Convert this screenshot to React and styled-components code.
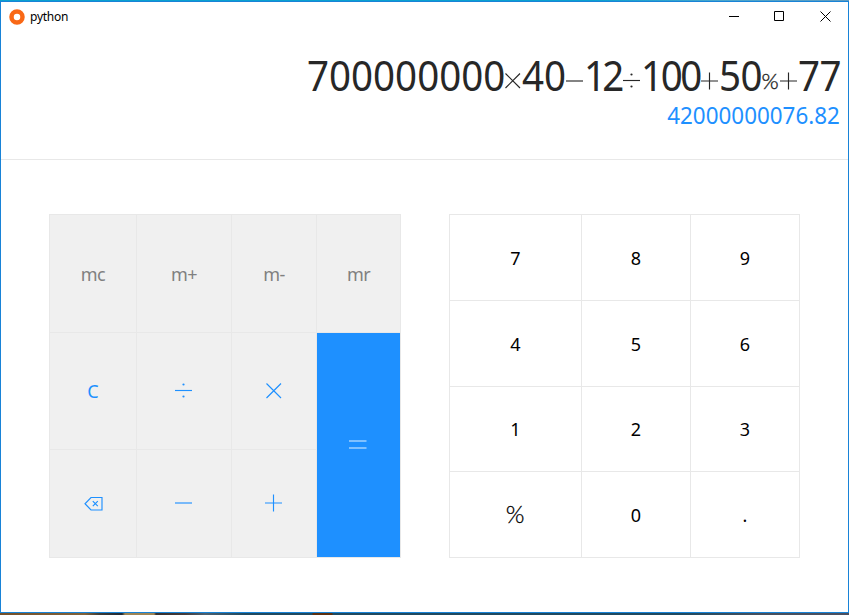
import React from "react";
import styled, { createGlobalStyle, css } from "styled-components";

const BLUE = "#1e90ff";
const LINE = "#e8e8e8";

const GlobalStyle = createGlobalStyle`
  * { box-sizing: border-box; }
  body { margin: 0; overflow: hidden; background: #1f4a60; font-family: "Noto Sans", "Open Sans", sans-serif; }
`;

const Desktop = styled.div`
  height: 615px;
  padding: 1px 0 2px;
  background:
    linear-gradient(90deg, #0ba0d0 0 70%, #4aa6cc 85%, #5f9cc0) top / 100% 1px no-repeat,
    linear-gradient(90deg, #74502a 0, #80623a 85px, #3a3b38 100px, #202a35 122px, #9c8455 125px 154px, #352f2e 156px, #443c3c 185px, #4b6070 205px, #1f4a60 245px 312px, #5c3010 313px 332px, #1f4a60 333px 680px, #46505e 760px, #4c5060) bottom / 100% 2px no-repeat;
`;

const Window = styled.main`
  display: flex;
  flex-direction: column;
  height: 612px;
  background: #fff;
  border: 1px solid #1883d7;
`;

const TitleBar = styled.header`
  display: flex;
  align-items: center;
  height: 29px;
  padding-left: 8px;
`;

const Title = styled.span`
  flex: 1;
  margin-left: 5px;
  padding-top: 1px;
  font-size: 12px;
  letter-spacing: -0.25px;
  line-height: 16px;
  color: #000;
`;

const Caption = styled.div`
  display: flex;
  width: 46px;
  height: 29px;
  align-items: center;
  justify-content: center;
  padding-bottom: 1px;
`;

const Display = styled.section`
  display: flex;
  flex-direction: column;
  align-items: flex-end;
  height: 129px;
  padding: 17px 8px 0 0;
  border-bottom: 1px solid ${LINE};
`;

const Expression = styled.div`
  display: flex;
  align-items: center;
  height: 54px;
  color: #272727;
`;

const Operand = styled.span`
  width: ${(p) => p.$width}px;
  font-size: 42px;
  line-height: 54px;
  letter-spacing: ${(p) => p.$spacing ?? 0}px;
  white-space: nowrap;
  transform: scaleX(0.917);
  transform-origin: left;
`;

const Percent = styled.span`
  width: 18px;
  padding-top: 12px;
  font-family: Lato, sans-serif;
  font-weight: 300;
  font-size: 22px;
  line-height: 24px;
  -webkit-text-stroke: 0.4px currentColor;
`;

const Result = styled.output`
  font-size: 24px;
  line-height: 26px;
  color: ${BLUE};
  transform: scaleX(0.934);
  transform-origin: right;
`;

const Keyboard = styled.section`
  display: flex;
  gap: 48px;
  padding: 54px 48px 0;
`;

const Pad = styled.div`
  display: grid;
  gap: 1px;
  padding: 1px;
  height: 344px;
  background: ${LINE};
  grid-template-columns: ${(p) => p.$columns};
  grid-template-rows: ${(p) => p.$rows};
`;

const tones = {
  memory: css`background: #f0f0f0; color: #808080; letter-spacing: -0.6px;`,
  action: css`background: #f0f0f0; color: ${BLUE};`,
  equals: css`background: ${BLUE}; color: #e2f1ff; grid-row: span 2; padding-right: 1px;`,
  digit: css`background: #fff; color: #000;`,
};

const Key = styled.button`
  display: flex;
  align-items: center;
  justify-content: center;
  border: 0;
  padding: 0;
  font: 18px/24px "Noto Sans", "Open Sans", sans-serif;
  ${(p) => tones[p.$tone]}
`;

const KeyPercent = styled.span`
  padding: 0 1px 2px 0;
  font-family: Lato, sans-serif;
  font-weight: 300;
  font-size: 24px;
  line-height: 24px;
  -webkit-text-stroke: 0.3px currentColor;
`;

const Glyph = styled.svg`
  display: block;
  flex: none;
  fill: none;
  stroke: currentColor;
  stroke-width: 1.15;
`;

const shapes = {
  plus: <path d="M0 9h17M8.500.5v17" />,
  minus: <path d="M0 9h17" />,
  times: <path d="M1.500 1.500L16 16M16 1.500L1.500 16" />,
  divide: (
    <>
      <path d="M0 8.500h17" />
      <circle cx="8.500" cy="2.500" r="1.100" fill="currentColor" stroke="none" />
      <circle cx="8.500" cy="14.500" r="1.100" fill="currentColor" stroke="none" />
    </>
  ),
  equals: <path d="M0 5h17.500M0 12h17.500" />,
};

const labels = { plus: "+", minus: "−", times: "×", divide: "÷", equals: "=" };

function Op({ name, className }) {
  return (
    <Glyph className={className} role="img" aria-label={labels[name]} width="18" height="19" viewBox="0 0 18 19">
      {shapes[name]}
    </Glyph>
  );
}

const ExpressionOp = styled(Op)`
  margin-top: 13px;
`;

function Backspace() {
  return (
    <Glyph role="img" aria-label="Backspace" width="19" height="16" viewBox="0 0 19 16">
      <path d="M7 1.500h11v12.500H7L1 7.750zM8.800 5.200l5 5M13.800 5.200l-5 5" />
    </Glyph>
  );
}

const functionKeys = [
  ["memory", "mc"],
  ["memory", "m+"],
  ["memory", "m-"],
  ["memory", "mr"],
  ["action", "C"],
  ["action", <Op name="divide" />],
  ["action", <Op name="times" />],
  ["equals", <Op name="equals" />],
  ["action", <Backspace />],
  ["action", <Op name="minus" />],
  ["action", <Op name="plus" />],
];

const digitKeys = ["7", "8", "9", "4", "5", "6", "1", "2", "3", "%", "0", "."];

export default function App() {
  return (
    <Desktop>
      <GlobalStyle />
      <Window>
        <TitleBar>
          <svg width="16" height="16" viewBox="0 0 16 16">
            <circle cx="8" cy="8" r="5.500" fill="none" stroke="#f96816" strokeWidth="4.500" />
          </svg>
          <Title>python</Title>
          <Caption>
            <svg width="12" height="10"><path d="M2 5.500h10" stroke="#000" /></svg>
          </Caption>
          <Caption>
            <svg width="10" height="10"><path d="M.5.5h9v9h-9z" fill="none" stroke="#000" /></svg>
          </Caption>
          <Caption>
            <svg width="11" height="11"><path d="M.5.5l10 10M10.500.5l-10 10" stroke="#000" /></svg>
          </Caption>
        </TitleBar>
        <Display>
          <Expression>
            <Operand $width={197}>700000000</Operand>
            <ExpressionOp name="times" />
            <Operand $width={44}>40</Operand>
            <ExpressionOp name="minus" />
            <Operand $width={38.5} $spacing={-4}>12</Operand>
            <ExpressionOp name="divide" />
            <Operand $width={60} $spacing={-2.6}>100</Operand>
            <ExpressionOp name="plus" />
            <Operand $width={43} $spacing={-0.6}>50</Operand>
            <Percent>%</Percent>
            <ExpressionOp name="plus" />
            <Operand $width={42.5} $spacing={-0.6}>77</Operand>
          </Expression>
          <Result>42000000076.82</Result>
        </Display>
        <Keyboard>
          <Pad $columns="86px 94px 84px 83px" $rows="117px 116px 107px">
            {functionKeys.map(([tone, face], i) => (
              <Key key={i} $tone={tone}>{face}</Key>
            ))}
          </Pad>
          <Pad $columns="131px 108px 108px" $rows="85px 85px 84px 85px">
            {digitKeys.map((d) => (
              <Key key={d} $tone="digit">{d === "%" ? <KeyPercent>%</KeyPercent> : d}</Key>
            ))}
          </Pad>
        </Keyboard>
      </Window>
    </Desktop>
  );
}
